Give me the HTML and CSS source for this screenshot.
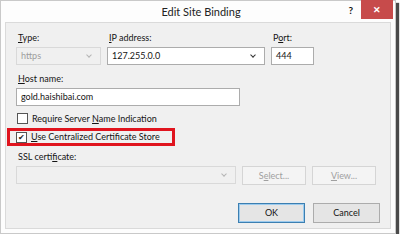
FILE: index.html
```html
<!DOCTYPE html>
<html lang="en">
<head>
    <meta charset="UTF-8">
    <title>Edit Site Binding</title>
    <link rel="stylesheet" href="styles.css">
</head>
<body>
    <div class="window">
        <div class="titlebar">
            <span class="title">Edit Site Binding</span>
            <span class="help">?</span>
            <span class="close">&#x2715;</span>
        </div>
        <div class="panel">
            <div class="row">
                <div class="field type">
                    <label><u>T</u>ype:</label>
                    <div class="combo disabled"><span>https</span><i class="arrow"></i></div>
                </div>
                <div class="field ip">
                    <label><u>I</u>P address:</label>
                    <div class="combo"><span>127.255.0.0</span><i class="arrow"></i></div>
                </div>
                <div class="field port">
                    <label>P<u>o</u>rt:</label>
                    <div class="textbox">444</div>
                </div>
            </div>
            <div class="field host">
                <label><u>H</u>ost name:</label>
                <div class="textbox">gold.haishibai.com</div>
            </div>
            <div class="check sni">
                <span class="box"></span>
                <span>Require Server <u>N</u>ame Indication</span>
            </div>
            <div class="check ccs">
                <span class="box checked">&#x2714;</span>
                <span><u>U</u>se Centralized Certificate Store</span>
            </div>
            <div class="field ssl">
                <label>SSL certi<u>f</u>icate:</label>
                <div class="row">
                    <div class="combo disabled wide"><span></span><i class="arrow"></i></div>
                    <div class="btn disabled">S<u>e</u>lect...</div>
                    <div class="btn disabled"><u>V</u>iew...</div>
                </div>
            </div>
            <div class="actions">
                <div class="btn default">OK</div>
                <div class="btn">Cancel</div>
            </div>
        </div>
    </div>
</body>
</html>
```

FILE: styles.css
```css
* {
    margin: 0;
    padding: 0;
    box-sizing: border-box;
}
body {
    background: #fff;
    font: 9px/12px Lato, "Noto Sans", sans-serif;
    color: #141414;
}
u {
    text-decoration: underline;
    text-underline-offset: 1px;
}
.window {
    width: 396px;
    height: 234px;
    background: #fdfdfd;
    border: 1px solid #c9c9c9;
    box-shadow: 3px 3px 1px #4a4a4a;
    display: flex;
    flex-direction: column;
}
.titlebar {
    position: relative;
    height: 21px;
    display: flex;
    align-items: center;
    justify-content: center;
}
.title {
    font-size: 11px;
    color: #222;
    margin-left: 6px;
}
.help {
    position: absolute;
    right: 42px;
    top: 3px;
    font-weight: 700;
    font-size: 10px;
}
.close {
    position: absolute;
    right: 2px;
    top: -1px;
    width: 32px;
    height: 19px;
    background: #c74b4b;
    color: #fff;
    font-size: 9px;
    font-weight: 700;
    display: flex;
    align-items: center;
    justify-content: center;
}
.panel {
    flex: 1;
    margin: 0 4px 4px;
    background: #f0f0f0;
    border: 1px solid #dadada;
    padding: 9px 10px 0;
    display: flex;
    flex-direction: column;
}
.row {
    display: flex;
    gap: 6px;
}
.field label {
    display: block;
    padding-left: 2px;
    height: 15px;
}
.combo, .textbox {
    height: 18px;
    border: 1px solid #acacac;
    background: #fff;
    display: flex;
    align-items: center;
    padding-left: 4px;
}
.combo span {
    flex: 1;
}
.arrow {
    width: 4px;
    height: 4px;
    border-right: 1px solid #333;
    border-bottom: 1px solid #333;
    transform: rotate(45deg);
    margin: 0 9px 3px 0;
}
.combo.disabled {
    background: #f0f0f0;
    border-color: #d9d9d9;
    color: #9d9d9d;
}
.combo.disabled .arrow {
    border-color: #b5b5b5;
}
.type .combo { width: 85px; }
.ip .combo { width: 158px; }
.port .textbox { width: 43px; }
.field.host {
    margin-top: 8px;
}
.host .textbox { width: 224px; }
.check {
    display: flex;
    align-items: center;
    gap: 4px;
    height: 13px;
    padding-left: 1px;
    white-space: nowrap;
}
.check.sni {
    margin-top: 6px;
}
.box {
    width: 11px;
    height: 11px;
    border: 1px solid #555;
    background: #fff;
    font-size: 8px;
    line-height: 9px;
    text-align: center;
    color: #222;
}
.check.ccs {
    margin: 3px 0 0 -9px;
    align-self: flex-start;
    height: 18px;
    border: 3px solid #e0141e;
    padding: 0 12px 0 6px;
}
.field.ssl {
    margin-top: 5px;
}
.field.ssl .row {
    gap: 6px;
}
.combo.wide { width: 220px; }
.btn {
    width: 64px;
    height: 19px;
    border: 1px solid #acacac;
    background: #e5e5e5;
    text-align: center;
    line-height: 17px;
}
.btn.disabled {
    background: #f4f4f4;
    border-color: #d5d5d5;
    color: #a0a0a0;
}
.actions {
    display: flex;
    justify-content: flex-end;
    gap: 8px;
    margin-top: 18px;
}
.actions .btn {
    width: 67px;
    height: 20px;
    line-height: 18px;
}
.btn.default {
    border-color: #3c7fb1;
    box-shadow: inset 0 0 0 1px #9ccbee;
}
```
